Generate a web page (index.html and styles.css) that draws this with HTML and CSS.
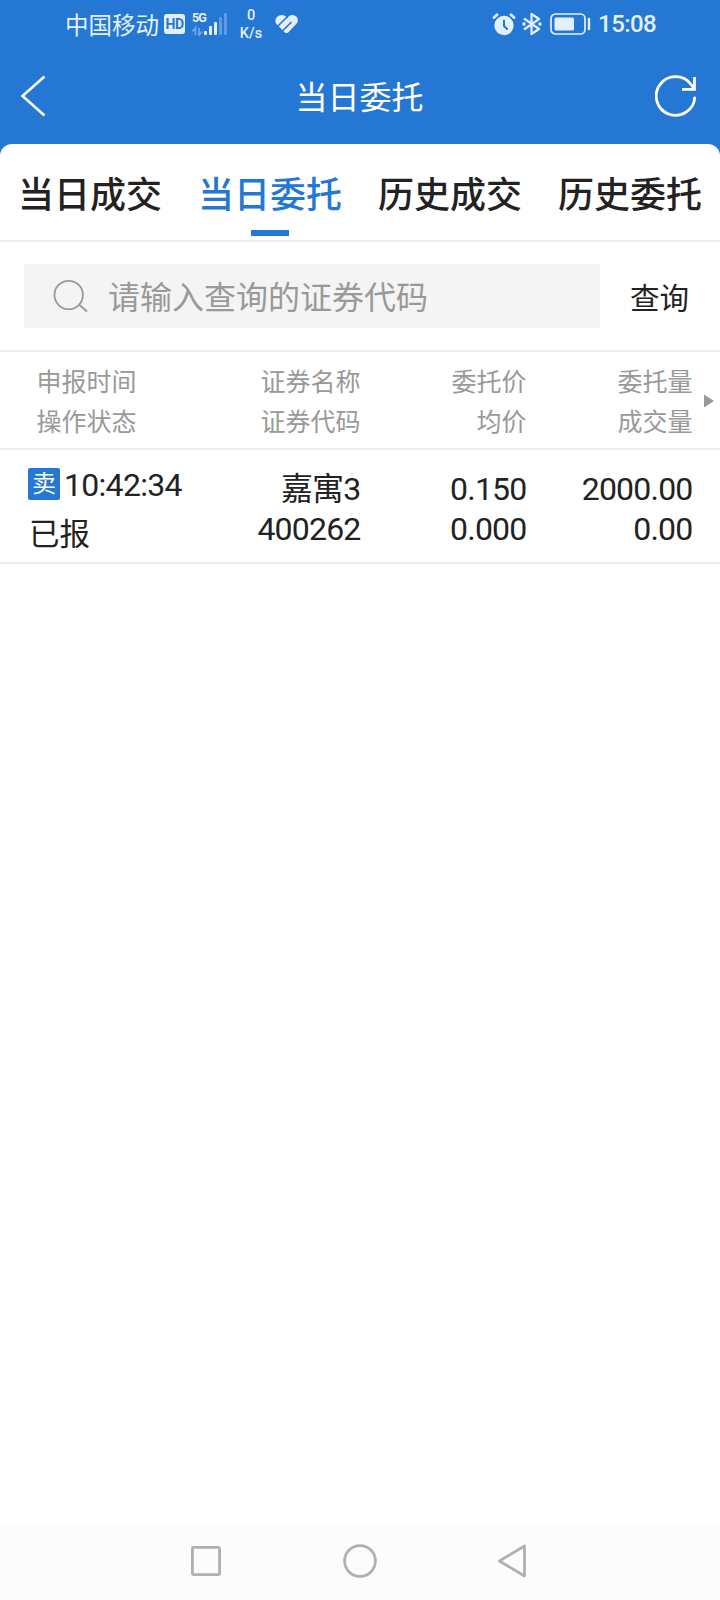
FILE: index.html
```
<!DOCTYPE html>
<html lang="zh-CN">

<head>
	<meta charset="UTF-8">
	<meta name="viewport" content="width=device-width, initial-scale=1.0">
	<title>当日委托</title>
	<link rel="stylesheet" href="styles.css">
</head>

<body>
	<div class="status-bar">
		<span class="carrier">中国移动</span>
		<span class="hd">HD</span>
		<div class="network">
			<span class="network-type">5G</span>
			<svg class="signal" width="36" height="24" viewBox="0 0 36 24" fill="#e4effc">
				<path d="M3.500 23V16L.5 19.500M7 16v7l3-3.500" fill="none" stroke="#e4effc" stroke-width="1.800" opacity=".4" />
				<rect x="12" y="19" width="3" height="4" rx="1" />
				<rect x="17" y="14" width="3" height="9" rx="1" />
				<rect x="22" y="10" width="3" height="13" rx="1" />
				<rect x="27" y="5" width="3" height="18" rx="1" opacity=".3" />
				<rect x="32" y="1" width="3" height="22" rx="1" opacity=".3" />
			</svg>
		</div>
		<div class="speed"><span>0</span><span>K/s</span></div>
		<svg class="health" width="24" height="22" viewBox="0 0 24 22">
			<path d="M11.500 4.200C9 1.200 4.500 1.400 2 4C0 6.200-.2 9 1.500 11L9.500 19.200Q11.500 21 13.500 19.200L21.200 11C23.500 8.500 23.300 5.500 21.200 3.500C18.800 1.300 15.500 1.500 13.500 3.500L12.500 5z" fill="#e4effc" />
			<path d="M2.500 13.500L12.500 3.500M7.500 18L16.500 9" stroke="#2577d4" stroke-width="1.700" />
		</svg>
		<div class="status-right">
			<svg class="alarm" width="24" height="24" viewBox="0 0 24 24">
				<circle cx="12" cy="13.500" r="9.700" fill="#e4effc" />
				<path d="M2 5.500L5 2.800M22 5.500L19 2.800" stroke="#e4effc" stroke-width="2.800" stroke-linecap="round" />
				<path d="M12 8.500V14L15 17" fill="none" stroke="#2577d4" stroke-width="2" stroke-linecap="round" />
			</svg>
			<svg class="bluetooth" width="20" height="24" viewBox="0 0 20 24" fill="none" stroke="#e4effc" stroke-width="2.300">
				<path d="M2 6.500L17 17L9.500 22V2L17 7L2 17.500" stroke-linejoin="round" />
				<path d="M.5 12h3M16.500 12h3" stroke-width="2.800" />
			</svg>
			<svg class="battery" width="41" height="22" viewBox="0 0 41 22">
				<rect x="1" y="1" width="34" height="20" rx="4.500" fill="none" stroke="#e4effc" stroke-width="1.700" />
				<rect x="4.500" y="4.500" width="19.500" height="13" rx="1.500" fill="#e4effc" />
				<path d="M39 6v10" stroke="#e4effc" stroke-width="2.400" stroke-linecap="round" />
			</svg>
			<span class="clock">15:08</span>
		</div>
	</div>

	<header>
		<svg width="26" height="42" viewBox="0 0 26 42" fill="none" stroke="#fff" stroke-width="2.500">
			<path d="M24.500 1.500L2.500 21L24.500 40.500" />
		</svg>
		<h1>当日委托</h1>
		<svg width="42" height="42" viewBox="0 0 42 42" fill="none" stroke="#fff" stroke-width="2.800">
			<path d="M39.800 21.700A19.300 19.300 0 1 1 36 9.500" />
			<path d="M39.500 2V14.300H27M36 9.500L39.500 14" />
		</svg>
	</header>

	<main>
		<nav class="tabs">
			<a class="tab">当日成交</a>
			<a class="tab active">当日委托</a>
			<a class="tab">历史成交</a>
			<a class="tab">历史委托</a>
		</nav>

		<div class="search">
			<div class="search-box">
				<svg width="36" height="36" viewBox="0 0 36 36" fill="none" stroke="#999" stroke-width="1.800">
					<circle cx="15.700" cy="17" r="14.200" />
					<path d="M26 26.500L34 33.500" />
				</svg>
				<span>请输入查询的证券代码</span>
			</div>
			<span class="search-button">查询</span>
		</div>

		<div class="grid grid-head">
			<div class="cell"><span>申报时间</span><span>操作状态</span></div>
			<div class="cell"><span>证券名称</span><span>证券代码</span></div>
			<div class="cell"><span>委托价</span><span>均价</span></div>
			<div class="cell"><span>委托量</span><span>成交量</span></div>
			<svg class="more" width="10" height="14" viewBox="0 0 10 14" fill="#999">
				<path d="M0 0.500L10 7L0 13.500z" />
			</svg>
		</div>

		<div class="grid grid-row">
			<div class="cell">
				<div class="time"><span class="badge">卖</span><span>10:42:34</span></div>
				<span class="state">已报</span>
			</div>
			<div class="cell"><span>嘉寓3</span><span>400262</span></div>
			<div class="cell"><span>0.150</span><span>0.000</span></div>
			<div class="cell"><span>2000.00</span><span>0.00</span></div>
		</div>
	</main>

	<footer>
		<svg width="32" height="36" viewBox="0 0 32 36" fill="none" stroke="#b0b0b0" stroke-width="2.800">
			<rect x="2.400" y="4.400" width="27.200" height="27.200" rx="1.500" />
		</svg>
		<svg width="36" height="36" viewBox="0 0 36 36" fill="none" stroke="#b0b0b0" stroke-width="2.800">
			<circle cx="18" cy="18" r="15.400" />
		</svg>
		<svg width="32" height="36" viewBox="0 0 32 36" fill="none" stroke="#b0b0b0" stroke-width="2.800" stroke-linejoin="round">
			<path d="M26.500 3V33L1.400 18z" />
		</svg>
	</footer>
</body>

</html>
```
FILE: styles.css
```
body {
	display: flex;
	flex-direction: column;
	height: 1600px;
	margin: 0;
	background-color: #2577d4;
	color: #222;
	font-family: Roboto, 'Noto Sans CJK SC', sans-serif;
}

svg {
	display: block;
	flex: none;
}

.status-bar {
	display: flex;
	align-items: center;
	box-sizing: border-box;
	height: 48px;
	padding: 0 64px 0 65px;
	color: #e4effc;
}

.carrier {
	width: 99px;
	font-size: 23.5px;
	white-space: nowrap;
}

.hd {
	width: 21px;
	height: 20px;
	border-radius: 3px;
	background-color: #e4effc;
	color: #2577d4;
	font-size: 14px;
	font-weight: 700;
	letter-spacing: -0.5px;
	line-height: 21px;
	text-align: center;
}

.network {
	position: relative;
	margin-left: 7px;
}

.network-type {
	position: absolute;
	top: 0;
	left: 0;
	font-size: 12.5px;
	font-weight: 700;
	letter-spacing: -1px;
	line-height: 12px;
}

.speed {
	display: flex;
	flex-direction: column;
	align-items: center;
	width: 24px;
	margin: 2px 0 0 11px;
	font-size: 14.5px;
	font-weight: 500;
	line-height: 18px;
}

.health {
	margin-left: 12px;
}

.status-right {
	display: flex;
	align-items: center;
	margin-left: auto;
}

.bluetooth {
	margin-left: 6px;
}

.battery {
	margin: 0 7px 0 8px;
}

.clock {
	font-size: 24px;
	font-weight: 500;
	letter-spacing: -0.6px;
	line-height: 50px;
}

header {
	display: flex;
	align-items: center;
	justify-content: space-between;
	box-sizing: border-box;
	height: 96px;
	padding: 0 23px 0 20px;
}

h1 {
	margin: 0 0 2px 18px;
	color: #fff;
	font-size: 32px;
	font-weight: 400;
}

main {
	flex: 1;
	border-radius: 12px 12px 0 0;
	background-color: #fff;
}

.tabs {
	display: grid;
	grid-template-columns: repeat(4, 1fr);
	height: 96px;
	border-bottom: 2px solid #ededed;
}

.tab {
	position: relative;
	box-sizing: border-box;
	height: 96px;
	padding-top: 8px;
	font-size: 36px;
	font-weight: 500;
	line-height: 88px;
	text-align: center;
}

.tab.active {
	color: #2577d4;
}

.tab.active::after {
	content: '';
	position: absolute;
	bottom: 4px;
	left: 71px;
	width: 38px;
	height: 6px;
	background-color: #2577d4;
}

.search {
	display: flex;
	align-items: center;
	height: 108px;
	padding: 0 24px;
	border-bottom: 2px solid #ededed;
}

.search-box {
	display: flex;
	align-items: center;
	box-sizing: border-box;
	width: 576px;
	height: 64px;
	padding-left: 29px;
	background-color: #f4f4f4;
	color: #999;
	font-size: 32px;
}

.search-box span {
	margin: 0 0 2px 19px;
}

.search-button {
	margin-left: 30px;
	font-size: 29.5px;
}

.grid {
	display: grid;
	grid-template-columns: 194.5px 166px 166px 166px 27.5px;
	box-sizing: border-box;
	border-bottom: 2px solid #ededed;
}

.cell {
	display: flex;
	flex-direction: column;
	align-items: flex-end;
	line-height: 40px;
}

.cell:first-child {
	align-items: flex-start;
}

.grid-head {
	height: 98px;
	padding-top: 11px;
	color: #999;
	font-size: 25px;
}

.grid-head .cell:first-child {
	padding-left: 36.5px;
}

.more {
	margin: 31px 0 0 11.5px;
}

.grid-row {
	height: 114px;
	padding-top: 19px;
	font-size: 32px;
	letter-spacing: -0.8px;
}

.grid-row .cell:first-child {
	padding-left: 28px;
}

.time {
	display: flex;
	margin-top: -1px;
	letter-spacing: -0.7px;
	line-height: 34px;
}

.badge {
	width: 32px;
	height: 32px;
	margin-right: 4px;
	border-radius: 2px;
	background-color: #2577d4;
	color: #fff;
	font-size: 24px;
	letter-spacing: 0;
	line-height: 32px;
	text-align: center;
}

.state {
	margin-top: 13px;
	padding-left: 1px;
	font-size: 30.5px;
	letter-spacing: 0;
}

footer {
	display: flex;
	align-items: center;
	justify-content: center;
	gap: 120px;
	height: 78px;
	background-color: #fcfcfc;
}
```
